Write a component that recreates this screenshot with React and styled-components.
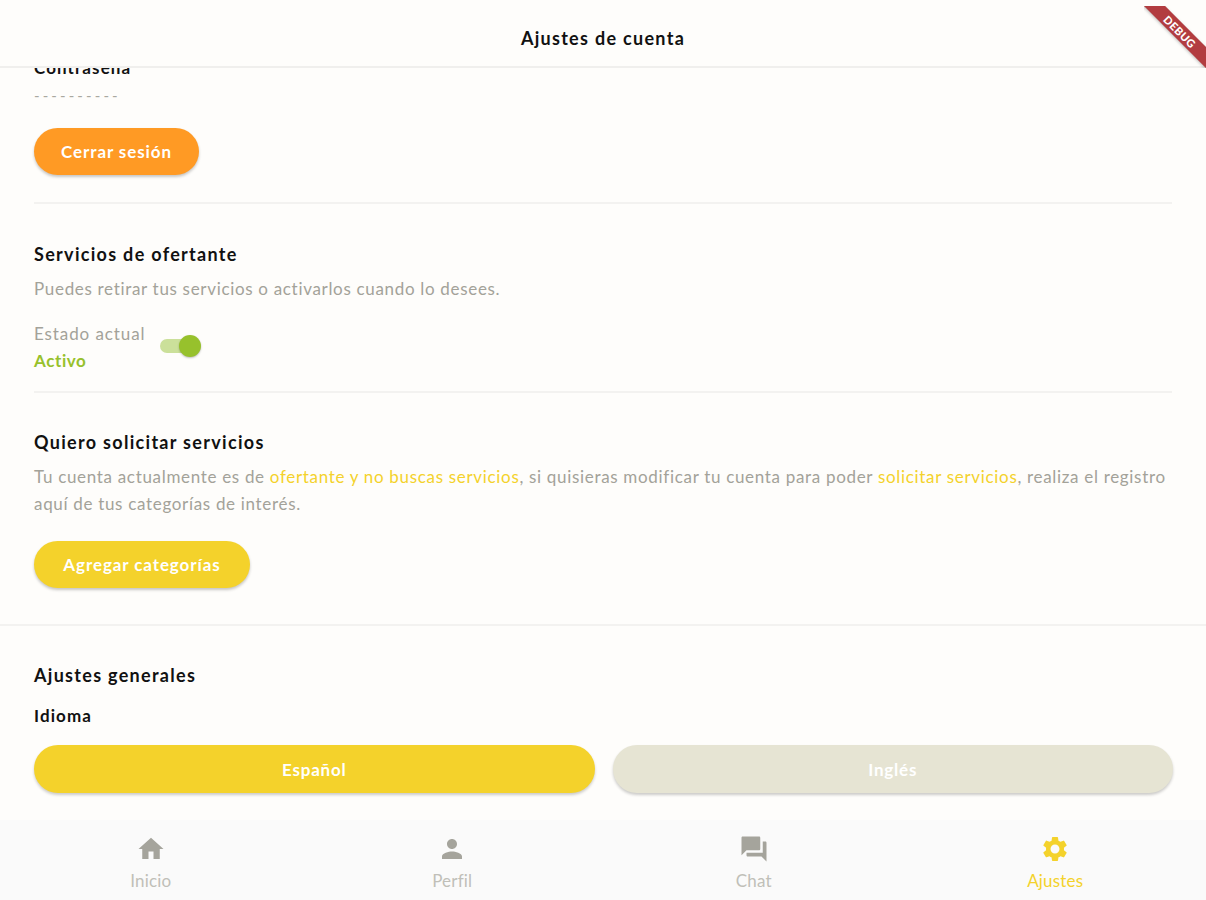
import React from 'react'
import styled, { createGlobalStyle } from 'styled-components'
import { MdHome, MdPerson, MdQuestionAnswer, MdSettings } from 'react-icons/md'

const GlobalStyle = createGlobalStyle`
  html, body {
    margin: 0;
    padding: 0;
    background: #fefdfb;
    font-family: "Lato", "Liberation Sans", sans-serif;
  }
  * { box-sizing: border-box; }
`

const tabs = [
  { label: 'Inicio', Icon: MdHome },
  { label: 'Perfil', Icon: MdPerson },
  { label: 'Chat', Icon: MdQuestionAnswer },
  { label: 'Ajustes', Icon: MdSettings, active: true },
]

function App() {
  return (
    <Page>
      <GlobalStyle />
      <Header>Ajustes de cuenta</Header>
      <BannerClip>
        <Banner>DEBUG</Banner>
      </BannerClip>

      <Content>
        <Account>
          <ClippedLabel>Contraseña</ClippedLabel>
          <Dots>----------</Dots>
          <PillButton $color="#ff9a24" $width={165}>Cerrar sesión</PillButton>
        </Account>

        <Section $height={189} $top={38}>
          <Title>Servicios de ofertante</Title>
          <Text $bottom={22}>Puedes retirar tus servicios o activarlos cuando lo desees.</Text>
          <StatusRow>
            <div>
              <StatusLabel>Estado actual</StatusLabel>
              <StatusValue>Activo</StatusValue>
            </div>
            <Switch><Knob /></Switch>
          </StatusRow>
        </Section>

        <Section $height={231} $top={37} $last>
          <Title>Quiero solicitar servicios</Title>
          <Text $bottom={24}>
            Tu cuenta actualmente es de <Mark>ofertante y no buscas servicios</Mark>, si quisieras
            modificar tu cuenta para poder <Mark>solicitar servicios</Mark>, realiza el registro
            aquí de tus categorías de interés.
          </Text>
          <PillButton $color="#f4d22b" $width={216}>Agregar categorías</PillButton>
        </Section>

        <General>
          <Title>Ajustes generales</Title>
          <SubTitle>Idioma</SubTitle>
          <LangRow>
            <LangButton $color="#f4d22b">Español</LangButton>
            <LangButton $color="#e6e4d3">Inglés</LangButton>
          </LangRow>
        </General>
      </Content>

      <BottomNav>
        {tabs.map(({ label, Icon, active }) => (
          <Tab key={label} $active={active}>
            <Icon size={30} />
            <span>{label}</span>
          </Tab>
        ))}
      </BottomNav>
    </Page>
  )
}

export default App

const Page = styled.div`
  position: relative;
  width: 1206px;
  height: 900px;
  display: flex;
  flex-direction: column;
  overflow: hidden;
  background: #fefdfb;
`

const Header = styled.header`
  flex: none;
  height: 68px;
  padding-top: 10px;
  display: flex;
  align-items: center;
  justify-content: center;
  font-size: 18px;
  font-weight: 700;
  letter-spacing: 1.3px;
  color: #111;
  background: #fefdfb;
  border-bottom: 2px solid #f0efed;
`

const BannerClip = styled.div`
  position: absolute;
  top: 6px;
  right: 0;
  width: 62px;
  height: 62px;
  overflow: hidden;
`

const Banner = styled.div`
  position: absolute;
  left: -14px;
  top: 18px;
  width: 100px;
  height: 15px;
  transform: rotate(45deg);
  display: flex;
  align-items: center;
  justify-content: center;
  background: #b23c40;
  box-shadow: 0 1px 3px rgba(0, 0, 0, 0.25);
  color: #fff;
  font-size: 11px;
  font-weight: 900;
  letter-spacing: 0.4px;
`

const Content = styled.main`
  flex: 1;
  min-height: 0;
  overflow: hidden;
`

const Account = styled.section`
  height: 136px;
  margin: 0 34px;
  border-bottom: 2px solid #f3f2f0;
`

const ClippedLabel = styled.div`
  height: 10px;
  display: flex;
  align-items: flex-end;
  font-size: 17px;
  font-weight: 700;
  line-height: 20px;
  letter-spacing: 1.1px;
  color: #111;
  overflow: hidden;
`

const Dots = styled.div`
  height: 50px;
  padding-top: 7px;
  font-size: 15px;
  line-height: 20px;
  letter-spacing: 3.1px;
  color: #a9a8a0;
`

const PillButton = styled.button`
  display: flex;
  align-items: center;
  justify-content: center;
  width: ${(p) => p.$width}px;
  height: 47px;
  padding: 0;
  border: none;
  border-radius: 24px;
  background: ${(p) => p.$color};
  box-shadow: 0 2px 3px rgba(0, 0, 0, 0.22);
  color: #fff;
  font-family: inherit;
  font-size: 17px;
  font-weight: 700;
  letter-spacing: 0.9px;
`

const Section = styled.section`
  height: ${(p) => p.$height}px;
  margin: 0 34px;
  padding-top: ${(p) => p.$top}px;
  ${(p) => (p.$last ? '' : 'border-bottom: 2px solid #f3f2f0;')}
`

const Title = styled.h2`
  margin: 0;
  font-size: 18px;
  font-weight: 700;
  line-height: 24px;
  letter-spacing: 1.3px;
  color: #111;
`

const Text = styled.p`
  margin: 9px 0 ${(p) => p.$bottom}px;
  font-size: 17px;
  line-height: 27px;
  letter-spacing: 0.68px;
  color: #a3a299;
`

const Mark = styled.span`
  color: #f4d22b;
`

const StatusRow = styled.div`
  display: flex;
  align-items: center;
  gap: 15px;
  margin-top: -4px;
`

const StatusLabel = styled.div`
  font-size: 17px;
  line-height: 27px;
  letter-spacing: 0.9px;
  color: #a3a299;
`

const StatusValue = styled.div`
  font-size: 17px;
  font-weight: 700;
  line-height: 27px;
  letter-spacing: 0.6px;
  color: #97c12c;
`

const Switch = styled.div`
  position: relative;
  width: 40px;
  height: 14px;
  margin-bottom: 3px;
  border-radius: 7px;
  background: #cbe09a;
`

const Knob = styled.div`
  position: absolute;
  top: -4px;
  right: -1px;
  width: 22px;
  height: 22px;
  border-radius: 50%;
  background: #97c12c;
  box-shadow: 0 1px 2px rgba(0, 0, 0, 0.25);
`

const General = styled.section`
  padding: 37px 33px 0 34px;
  border-top: 2px solid #f3f2f0;
`

const SubTitle = styled.div`
  margin-top: 18px;
  font-size: 17px;
  font-weight: 700;
  line-height: 22px;
  letter-spacing: 1.1px;
  color: #111;
`

const LangRow = styled.div`
  display: grid;
  grid-template-columns: 1fr 1fr;
  gap: 18px;
  margin-top: 18px;
`

const LangButton = styled.button`
  height: 48px;
  border: none;
  border-radius: 24px;
  background: ${(p) => p.$color};
  box-shadow: 0 2px 3px rgba(0, 0, 0, 0.2);
  color: #fff;
  font-family: inherit;
  font-size: 17px;
  font-weight: 700;
  letter-spacing: 0.8px;
`

const BottomNav = styled.nav`
  flex: none;
  height: 80px;
  display: grid;
  grid-template-columns: repeat(4, 1fr);
  background: #fafafa;
`

const Tab = styled.div`
  display: flex;
  flex-direction: column;
  align-items: center;
  padding-top: 14px;
  color: ${(p) => (p.$active ? '#f4d22b' : '#a5a49c')};
  font-size: 17px;
  line-height: 22px;
  letter-spacing: 0.2px;

  span {
    margin-top: 6px;
    color: ${(p) => (p.$active ? '#f4d22b' : '#c0bfb8')};
  }
`
